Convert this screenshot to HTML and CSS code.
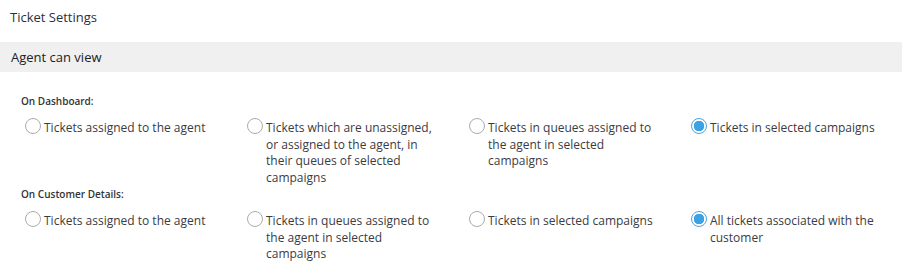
FILE: index.html
```html
<!DOCTYPE html>
<html lang="en">
<head>
  <meta charset="UTF-8">
  <meta name="viewport" content="width=device-width, initial-scale=1.0">
  <title>Ticket Settings</title>
  <link rel="stylesheet" href="styles.css">
</head>
<body>
  <div class="page-title">Ticket Settings</div>

  <div class="section-bar">Agent can view</div>

  <div class="section-body">
    <div class="group-label">On Dashboard:</div>
    <div class="options">
      <label class="option">
        <input type="radio" name="dashboard">
        <span>Tickets assigned to the agent</span>
      </label>
      <label class="option">
        <input type="radio" name="dashboard">
        <span>Tickets which are unassigned, or assigned to the agent, in their queues of selected campaigns</span>
      </label>
      <label class="option">
        <input type="radio" name="dashboard">
        <span>Tickets in queues assigned to the agent in selected campaigns</span>
      </label>
      <label class="option">
        <input type="radio" name="dashboard" checked>
        <span>Tickets in selected campaigns</span>
      </label>
    </div>

    <div class="group-label">On Customer Details:</div>
    <div class="options">
      <label class="option">
        <input type="radio" name="customer">
        <span>Tickets assigned to the agent</span>
      </label>
      <label class="option">
        <input type="radio" name="customer">
        <span>Tickets in queues assigned to the agent in selected campaigns</span>
      </label>
      <label class="option">
        <input type="radio" name="customer">
        <span>Tickets in selected campaigns</span>
      </label>
      <label class="option">
        <input type="radio" name="customer" checked>
        <span>All tickets associated with the customer</span>
      </label>
    </div>
  </div>
</body>
</html>
```

FILE: styles.css
```css
body {
  margin: 0;
  font-family: 'Open Sans', 'Noto Sans', sans-serif;
  color: #333;
  background: #fff;
}

.page-title {
  height: 42px;
  line-height: 35px;
  padding: 0 10px;
  font-size: 13px;
  color: #2e2e3a;
}

.section-bar {
  height: 30px;
  line-height: 30px;
  padding: 0 11px;
  background-color: #f0f0f0;
  font-size: 13px;
  color: #222;
}

.section-body {
  padding: 22px 21px 0;
}

.group-label {
  font-size: 10px;
  font-weight: 600;
  line-height: 14px;
  color: #333;
  margin-bottom: 12px;
}

.options {
  display: grid;
  grid-template-columns: repeat(4, 222px);
  padding-left: 4px;
  margin-bottom: 1px;
}

.option {
  display: flex;
  align-items: flex-start;
  gap: 3px;
  font-size: 12px;
  line-height: 16.5px;
  color: #3b3b44;
  cursor: pointer;
}

.option span {
  max-width: 170px;
}

.option input {
  appearance: none;
  -webkit-appearance: none;
  flex: none;
  width: 16px;
  height: 16px;
  margin: -2px 0 0 0;
  border: 1px solid #ababab;
  border-radius: 50%;
  background: #fff;
  cursor: pointer;
}

.option input:checked {
  border-color: #4aa3df;
  background: radial-gradient(circle, #3da2e3 0 5px, #fff 5.5px);
}
```
